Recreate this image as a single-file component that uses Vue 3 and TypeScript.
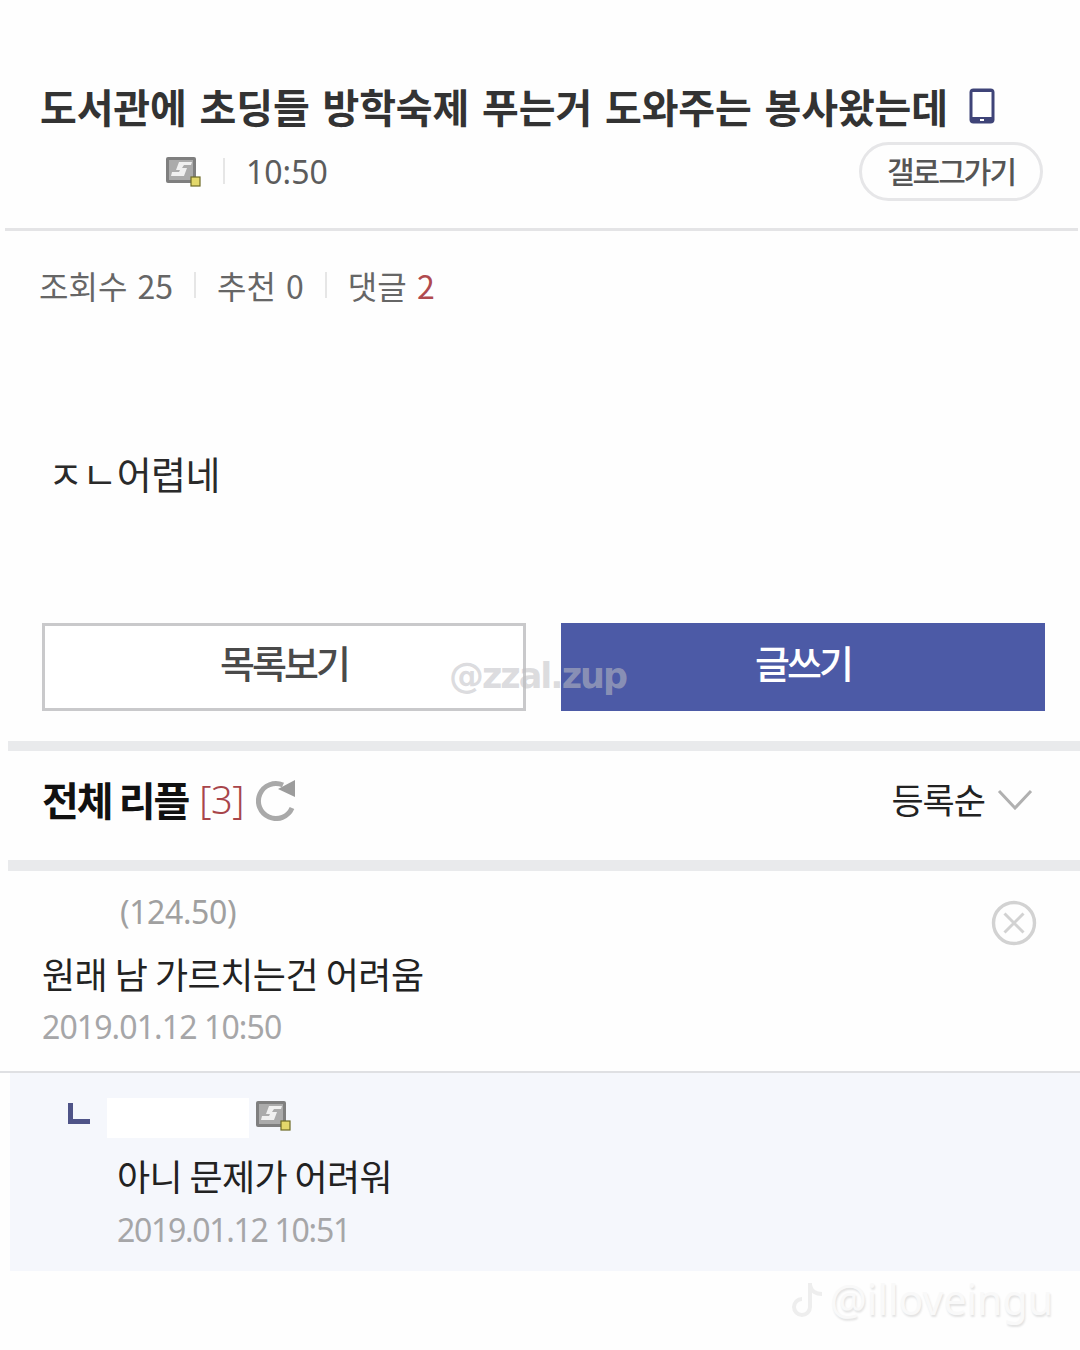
<script setup lang="ts">
const title: string = '도서관에 초딩들 방학숙제 푸는거 도와주는 봉사왔는데'
</script>

<template>
  <main class="page">
    <header class="head">
      <div class="title-row">
        <h1 class="title">{{ title }}</h1>
        <svg class="phone" width="28" height="38" viewBox="0 0 28 38">
          <rect x="1.5" y="1.5" width="25" height="35" rx="4" fill="#3f4478" />
          <rect x="4.5" y="5" width="19" height="25" fill="#fff" />
          <rect x="12" y="32" width="4" height="2" fill="#fff" />
        </svg>
      </div>
      <div class="meta-row">
        <svg class="medal" width="36" height="32" viewBox="0 0 36 32">
          <rect x="1" y="2" width="30" height="26" rx="2" fill="#7f7f7f" />
          <rect x="4" y="5" width="24" height="20" fill="#ababab" />
          <path d="M14 7 H27 L26 10 H19 L17 13 H22 L19 21 H6 L7 17 H14 L15 15 H11 Z" fill="#f0f0f0" />
          <rect x="26" y="22" width="9" height="9" fill="#e3d86b" stroke="#6d6a25" stroke-width="1.2" />
        </svg>
        <span class="vline meta-line"></span>
        <span class="time">10:50</span>
        <span class="gallog">갤로그가기</span>
      </div>
    </header>

    <div class="stats">
      <span>조회수 25</span>
      <span class="vline"></span>
      <span>추천 0</span>
      <span class="vline"></span>
      <span>댓글 <em>2</em></span>
    </div>

    <p class="body">ㅈㄴ어렵네</p>

    <div class="actions">
      <button class="btn ghost">목록보기</button>
      <button class="btn solid">글쓰기</button>
      <span class="mark-zzal">@zzal.zup</span>
    </div>

    <div class="band first"></div>

    <section class="reply-head">
      <div class="reply-title">
        <strong>전체 리플</strong>
        <span class="count">[3]</span>
        <svg class="refresh" width="42" height="44" viewBox="0 0 42 44">
          <path d="M36 31 A17.5 17.5 0 1 1 27 8" fill="none" stroke="#a9a9a9" stroke-width="5" />
          <path d="M22 12 L39 3 L39 20 Z" fill="#9c9c9c" />
        </svg>
      </div>
      <div class="sort">
        <span>등록순</span>
        <svg width="36" height="22" viewBox="0 0 36 22">
          <path d="M2 3 L18 20 L34 3" fill="none" stroke="#b0b0b0" stroke-width="3" />
        </svg>
      </div>
    </section>

    <div class="band second"></div>

    <article class="comment">
      <div class="ip">(124.50)</div>
      <div class="c-text">원래 남 가르치는건 어려움</div>
      <div class="c-date">2019.01.12 10:50</div>
      <svg class="close" width="46" height="46" viewBox="0 0 46 46">
        <circle cx="23" cy="23" r="20.5" fill="none" stroke="#d2d2d2" stroke-width="3.4" />
        <path d="M13.5 13.5 L32.5 32.5 M32.5 13.5 L13.5 32.5" stroke="#d2d2d2" stroke-width="3" />
      </svg>
    </article>

    <article class="sub">
      <div class="sub-top">
        <span class="elbow"></span>
        <span class="nick-mask"></span>
        <svg class="medal" width="36" height="32" viewBox="0 0 36 32">
          <rect x="1" y="2" width="30" height="26" rx="2" fill="#7f7f7f" />
          <rect x="4" y="5" width="24" height="20" fill="#ababab" />
          <path d="M14 7 H27 L26 10 H19 L17 13 H22 L19 21 H6 L7 17 H14 L15 15 H11 Z" fill="#f0f0f0" />
          <rect x="26" y="22" width="9" height="9" fill="#e3d86b" stroke="#6d6a25" stroke-width="1.2" />
        </svg>
      </div>
      <div class="sub-text">아니 문제가 어려워</div>
      <div class="sub-date">2019.01.12 10:51</div>
    </article>

    <div class="mark-tt">
      <svg width="36" height="40" viewBox="0 0 36 40">
        <path d="M20 4 V28 A8 8 0 1 1 12 20 M20 6 C21 12 26 15 32 15" fill="none" stroke="#eeeeee" stroke-width="4" />
      </svg>
      <span>@illoveingu</span>
    </div>
  </main>
</template>

<style>
html, body { margin: 0; background: #fff; }
</style>

<style scoped>
.page {
  position: relative;
  width: 1080px;
  height: 1350px;
  overflow: hidden;
  background: #fefefe;
  font-family: "Noto Sans CJK KR", "Noto Sans", sans-serif;
  color: #222;
}
.head {
  margin-left: 5px;
  width: 1073px;
  height: 231px;
  box-sizing: border-box;
  padding-top: 78px;
  border-bottom: 3px solid #e4e4e6;
}
.title-row { display: flex; align-items: center; height: 56px; padding-left: 35px; }
.title {
  margin: 0;
  font-size: 40px;
  line-height: 54px;
  font-weight: 700;
  letter-spacing: -0.14px;
  word-spacing: 4px;
  color: #333;
  white-space: nowrap;
}
.phone { margin-left: 20px; }
.meta-row { display: flex; align-items: center; height: 64px; margin-top: 5px; padding-left: 160px; }
.medal { flex: none; }
.vline { display: inline-block; width: 2px; height: 26px; background: #e6e6e6; }
.meta-line { margin-left: 22px; }
.time { margin-left: 21px; font-size: 32px; color: #5c5c5c; font-family: "Noto Sans", sans-serif; }
.gallog {
  margin-left: auto;
  margin-right: 35px;
  width: 184px;
  height: 59px;
  box-sizing: border-box;
  border: 3px solid #e6e6e8;
  border-radius: 30px;
  display: flex;
  align-items: center;
  justify-content: center;
  font-size: 30px;
  font-weight: 500;
  letter-spacing: -2px;
  padding-bottom: 3px;
  color: #555;
}
.stats {
  display: flex;
  align-items: center;
  gap: 21px;
  height: 44px;
  margin-top: 32px;
  padding-left: 39px;
  font-size: 32px;
  word-spacing: 3px;
  color: #666;
}
.stats em { font-style: normal; color: #b04a4e; }
.body {
  margin: 136px 0 0 48px;
  height: 60px;
  font-size: 38px;
  line-height: 60px;
  letter-spacing: -0.6px;
  color: #2a2a2a;
}
.actions {
  position: relative;
  display: flex;
  gap: 35px;
  margin-top: 120px;
  padding-left: 42px;
}
.btn {
  width: 484px;
  height: 88px;
  box-sizing: border-box;
  font-family: inherit;
  font-size: 38px;
  font-weight: 500;
  letter-spacing: -3px;
  padding: 0 0 12px;
}
.ghost { background: #fff; border: 3px solid #c9c9cb; color: #4a4a4a; }
.solid { background: #4c5aa6; border: 0; color: #fff; }
.mark-zzal {
  position: absolute;
  left: 449px;
  top: 30px;
  font-family: "DejaVu Sans", sans-serif;
  font-size: 35px;
  line-height: 46px;
  font-weight: 700;
  letter-spacing: -2px;
  color: rgba(190, 190, 195, 0.55);
}
.band { margin-left: 8px; height: 10px; background: #e9eaec; }
.first { margin-top: 30px; }
.reply-head {
  display: flex;
  align-items: center;
  justify-content: space-between;
  height: 109px;
  box-sizing: border-box;
  padding: 0 47px 14px 42px;
}
.reply-title { display: flex; align-items: center; }
.reply-title strong { font-size: 40px; font-weight: 700; letter-spacing: -2px; color: #111; }
.count { margin-left: 11px; font-size: 38px; font-weight: 300; letter-spacing: -0.5px; color: #a8454a; font-family: "Noto Sans", sans-serif; }
.refresh { margin-left: 12px; }
.sort { display: flex; align-items: center; gap: 12px; font-size: 35px; letter-spacing: -1px; color: #222; }
.second { height: 11px; }
.comment {
  position: relative;
  height: 202px;
  box-sizing: border-box;
  padding: 15px 0 0 42px;
  border-bottom: 2px solid #dfe0e3;
}
.ip { margin-left: 78px; height: 57px; font-size: 32px; line-height: 52px; letter-spacing: -0.4px; color: #a0a0a0; font-family: "Noto Sans", sans-serif; }
.c-text { height: 59px; font-size: 36px; line-height: 60px; letter-spacing: -0.5px; color: #222; }
.c-date, .sub-date { height: 50px; font-size: 32px; line-height: 50px; letter-spacing: -0.9px; color: #a6a6a8; font-family: "Noto Sans", sans-serif; }
.sub-date { letter-spacing: -1.3px; }
.close { position: absolute; right: 43px; top: 29px; }
.sub {
  margin-left: 10px;
  height: 198px;
  box-sizing: border-box;
  padding: 24px 0 0 107px;
  background: #f5f7fc;
}
.sub-top { display: flex; align-items: center; height: 36px; margin-left: -49px; }
.elbow { width: 22px; height: 21px; box-sizing: border-box; border-left: 5px solid #4f5488; border-bottom: 5px solid #4f5488; margin-bottom: 4px; }
.nick-mask { width: 142px; height: 40px; margin-left: 17px; margin-right: 6px; margin-top: 5px; background: #fff; }
.sub-text { margin-top: 12px; height: 60px; font-size: 36px; line-height: 60px; letter-spacing: -0.6px; color: #222; }
.mark-tt {
  position: absolute;
  left: 790px;
  top: 1271px;
  display: flex;
  align-items: center;
  gap: 4px;
  font-family: "Noto Sans", sans-serif;
  font-size: 41px;
  color: #f9f9f9;
  text-shadow: 1px 2px 2px #e2e2e2;
}
</style>
